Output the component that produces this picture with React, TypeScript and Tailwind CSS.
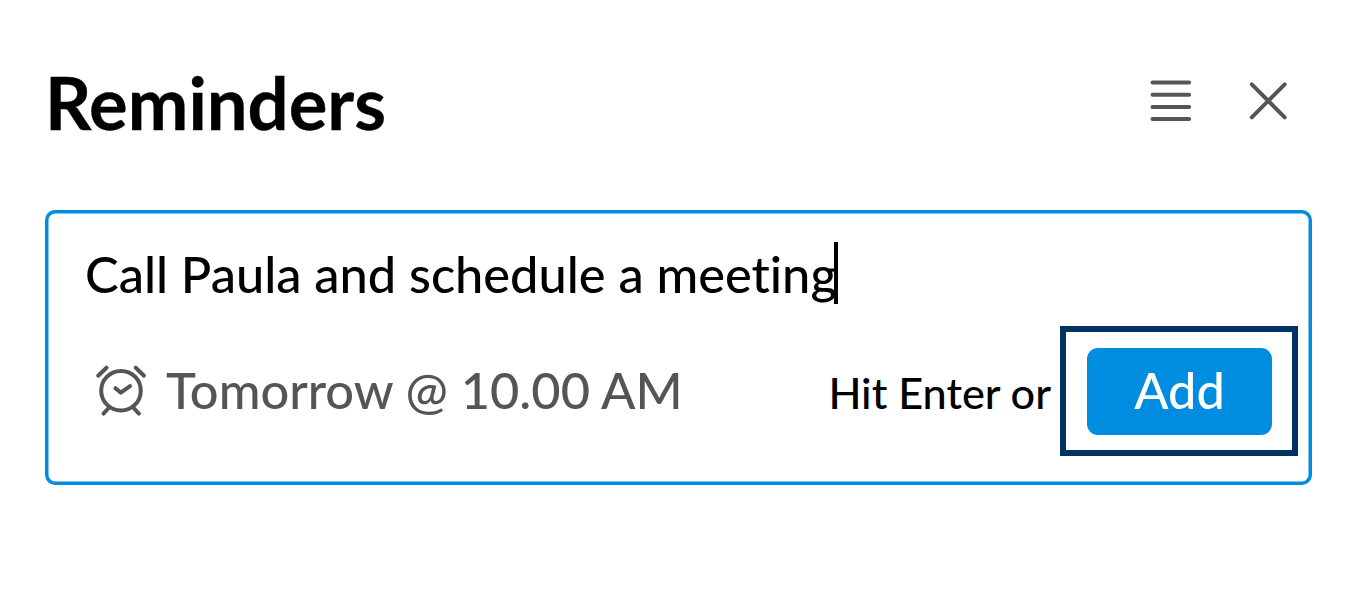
function MenuIcon() {
  return (
    <svg width="44" height="44" viewBox="0 0 44 44" fill="none" stroke="#555555" strokeWidth="4" strokeLinecap="round">
      <path d="M3.5 4.5H40.1M3.5 16.7H40.1M3.5 28.9H40.1M3.5 41H40.1" />
    </svg>
  );
}

function CloseIcon() {
  return (
    <svg width="40" height="40" viewBox="0 0 40 40" fill="none" stroke="#555555" strokeWidth="4" strokeLinecap="round">
      <path d="M3.8 4.3L36.7 37.3M36.7 4.3L3.8 37.3" />
    </svg>
  );
}

function AlarmIcon() {
  return (
    <svg width="54" height="54" viewBox="0 0 54 54" fill="none" stroke="#555555" strokeWidth="4" strokeLinecap="round" strokeLinejoin="round">
      <circle cx="27" cy="26.7" r="19.8" />
      <path d="M21.5 24.2L26.8 28.6L36 22.1" />
      <path d="M4.2 11.7L12.5 3.7M41.7 3.7L50 11.7" />
      <path d="M14.7 44L9.5 49.6M39.7 44L44.9 49.6" />
    </svg>
  );
}

export default function App() {
  return (
    <main className="h-[616px] w-[1360px] overflow-hidden bg-white pl-[45px] pr-12 pt-[58px] font-['Lato',sans-serif] text-black [font-variant-ligatures:none]">
      <header className="flex h-[152px] items-start justify-between pr-6">
        <h1 className="whitespace-nowrap text-[72.4px] font-bold leading-[88px] [-webkit-text-stroke:0.3px]">Reminders</h1>
        <div className="flex items-center gap-[55px] pt-5">
          <button aria-label="Menu"><MenuIcon /></button>
          <button aria-label="Close"><CloseIcon /></button>
        </div>
      </header>
      <section className="h-[275px] rounded-[10px] pl-10 pr-[14px] pt-8 shadow-[inset_0_0_0_3.5px_#008ddf]">
        <div className="flex h-[62px] items-center">
          <span className="whitespace-nowrap pt-0.5 text-[50.55px] font-medium leading-[62px]">Call Paula and schedule a meeting</span>
          <span className="-ml-[3px] h-[62px] w-[4px] bg-black" />
        </div>
        <div className="mt-[22px] flex h-[130px] items-center">
          <div className="flex items-center gap-[18px] pl-[9px] text-[#555555]">
            <AlarmIcon />
            <span className="-mt-0.5 whitespace-nowrap text-[50.6px] font-medium leading-[62px]">Tomorrow @ 10.00 AM</span>
          </div>
          <span className="ml-auto mr-[9px] mt-0.5 whitespace-nowrap text-[43.2px] font-medium leading-[52px]">Hit Enter or</span>
          <div className="flex h-[130px] w-[238px] shrink-0 items-center justify-center border-[6px] border-[#003264]">
            <button className="flex h-[87px] w-[185px] justify-center rounded-[11px] bg-[#008ddf] pl-px pt-[11px] text-[50.4px] font-medium leading-[62px] text-white">Add</button>
          </div>
        </div>
      </section>
    </main>
  );
}
